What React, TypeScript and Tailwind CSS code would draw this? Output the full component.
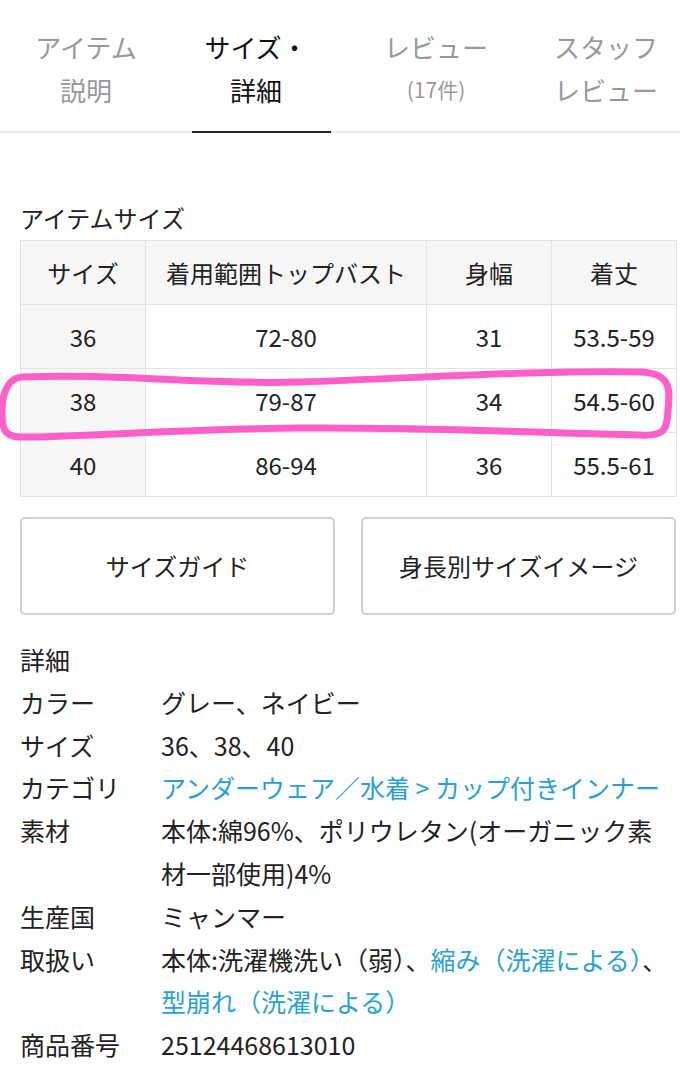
/**
 * Size & detail tab of a product page
 */
const font = { fontFamily: '"Noto Sans CJK JP", "Noto Sans", sans-serif' }

const tabs = [
  { lines: ['アイテム', '説明'], w: 'w-[172px]', active: false },
  { lines: ['サイズ・', '詳細'], w: 'w-[168px]', active: true },
  { lines: ['レビュー', '(17件)'], w: 'w-[192px]', active: false },
  { lines: ['スタッフ', 'レビュー'], w: 'w-[148px]', active: false },
]

const sizes = [
  ['36', '72-80', '31', '53.5-59'],
  ['38', '79-87', '34', '54.5-60'],
  ['40', '86-94', '36', '55.5-61'],
]

const cell = 'h-[64px] border border-[#e3e3e3] text-center align-middle'

export default function App() {
  return (
    <div className="relative w-[680px] min-h-[1080px] bg-white text-[#222]" style={font}>
      {/* Tabs */}
      <div className="flex border-b-2 border-[#ececec]">
        {tabs.map((t) => (
          <div
            key={t.lines[0]}
            className={`relative ${t.w} shrink-0 flex flex-col items-center pt-[25px] pb-[20px] text-[26px] leading-[43px] ${
              t.active ? 'text-[#111]' : 'text-[#999]'
            }`}
          >
            <span>{t.lines[0]}</span>
            <span className={t.lines[1].startsWith('(') ? 'text-[21px]' : ''}>{t.lines[1]}</span>
            {t.active && <div className="absolute left-[20px] -bottom-[2px] w-[139px] h-[2px] bg-[#222]" />}
          </div>
        ))}
      </div>

      <div className="pl-[20px] pr-[4px]">
        {/* Size table */}
        <div className="mt-[67px] text-[24px] leading-[36px]">アイテムサイズ</div>
        <table className="mt-[4px] w-[656px] border-collapse text-[24px] table-fixed">
          <colgroup>
            <col className="w-[125px]" />
            <col className="w-[281px]" />
            <col className="w-[125px]" />
            <col className="w-[125px]" />
          </colgroup>
          <thead>
            <tr className="bg-[#f6f6f6]">
              <th className={`${cell} font-normal`}>サイズ</th>
              <th className={`${cell} font-normal`}>着用範囲トップバスト</th>
              <th className={`${cell} font-normal`}>身幅</th>
              <th className={`${cell} font-normal`}>着丈</th>
            </tr>
          </thead>
          <tbody>
            {sizes.map((r) => (
              <tr key={r[0]}>
                <td className={`${cell} bg-[#f6f6f6]`}>{r[0]}</td>
                <td className={cell}>{r[1]}</td>
                <td className={cell}>{r[2]}</td>
                <td className={cell}>{r[3]}</td>
              </tr>
            ))}
          </tbody>
        </table>

        {/* Buttons */}
        <div className="mt-[20px] flex gap-[26px]">
          <button className="w-[315px] h-[98px] rounded-[5px] border-2 border-[#cfcfcf] text-[24px]">サイズガイド</button>
          <button className="w-[315px] h-[98px] rounded-[5px] border-2 border-[#cfcfcf] text-[24px]">身長別サイズイメージ</button>
        </div>

        {/* Details */}
        <div className="mt-[23px] text-[25px] leading-[42.8px]">
          <div>詳細</div>
          <div className="grid grid-cols-[141px_1fr]">
            <div>カラー</div>
            <div>グレー、ネイビー</div>
            <div>サイズ</div>
            <div>36、38、40</div>
            <div>カテゴリ</div>
            <div className="text-[#2a9fd3] whitespace-nowrap">アンダーウェア／水着 &gt; カップ付きインナー</div>
            <div>素材</div>
            <div>
              本体:綿96%、ポリウレタン(オーガニック素
              <br />
              材一部使用)4%
            </div>
            <div>生産国</div>
            <div>ミャンマー</div>
            <div>取扱い</div>
            <div>
              本体:洗濯機洗い（弱）、<span className="text-[#2a9fd3]">縮み（洗濯による）</span>、
              <br />
              <span className="text-[#2a9fd3]">型崩れ（洗濯による）</span>
            </div>
            <div>商品番号</div>
            <div>25124468613010</div>
          </div>
        </div>
      </div>

      {/* Hand-drawn highlight around the 38 row */}
      <svg className="absolute left-0 top-0 pointer-events-none" width="680" height="1080" viewBox="0 0 680 1080">
        <path
          d="M 22 377 C 120 373, 200 385, 300 382 C 420 378, 540 370, 640 372 C 672 373, 670 390, 668 410 C 667 428, 666 437, 640 435 C 520 432, 420 427, 300 428 C 180 429, 80 437, 20 437 C 3 437, 2 426, 2 412 C 2 395, 7 378, 22 377 Z"
          fill="none"
          stroke="#ff5fc8"
          strokeWidth="7"
          strokeLinejoin="round"
        />
      </svg>
    </div>
  )
}
